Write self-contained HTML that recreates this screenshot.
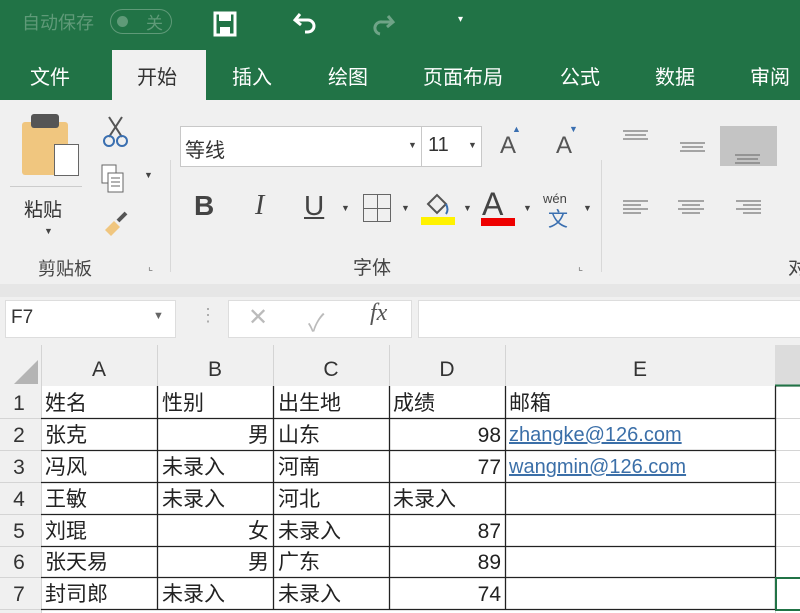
<!DOCTYPE html>
<html><head><meta charset="utf-8"><style>
*{margin:0;padding:0;box-sizing:border-box}
body{width:800px;height:613px;overflow:hidden;background:#fff;font-family:"Liberation Sans","Noto Sans CJK SC",sans-serif;position:relative}
.a{position:absolute}
.tab{position:absolute;top:61px;color:#fff;font-size:20px}
.c{position:absolute;font-size:21px;color:#222;line-height:31px;white-space:nowrap}
.r{text-align:right}
.hd{position:absolute;font-size:21px;color:#333;text-align:center}
a{color:#3b6fa8;text-decoration:underline}
</style></head><body>
<div class="a" style="left:0;top:0;width:800px;height:100px;background:#217346"></div>
<div class="a" style="left:22px;top:9px;color:#5f9a78;font-size:18px">自动保存</div>
<div class="a" style="left:110px;top:9px;width:62px;height:25px;border:1px solid #5f9a78;border-radius:13px"></div>
<div class="a" style="left:117px;top:16px;width:11px;height:11px;border-radius:50%;background:#5f9a78"></div>
<div class="a" style="left:146px;top:9px;color:#5f9a78;font-size:17px">关</div>
<svg class="a" style="left:212px;top:10px" width="28" height="28" viewBox="0 0 28 28"><rect x="3" y="3" width="20" height="22" fill="none" stroke="#fff" stroke-width="3"/><rect x="7" y="3" width="12" height="8" fill="#fff"/><rect x="8" y="17" width="10" height="8" fill="#fff"/></svg>
<svg class="a" style="left:292px;top:10px" width="28" height="28" viewBox="0 0 28 28"><path d="M8 4 L3 10 L9 15 M3 10 H16 A6 6 0 0 1 16 22 H13" fill="none" stroke="#fff" stroke-width="3"/></svg>
<svg class="a" style="left:370px;top:12px" width="28" height="28" viewBox="0 0 28 28" opacity=".35"><path d="M18 4 L23 10 L17 15 M23 10 H12 A6 6 0 0 0 10 22" fill="none" stroke="#fff" stroke-width="3"/></svg>
<div class="a" style="left:458px;top:14px;color:#fff;font-size:10px">▾</div>
<div class="a" style="left:112px;top:50px;width:94px;height:52px;background:#f0f0f0"></div>
<div class="tab" style="left:30px">文件</div>
<div class="tab" style="left:137px;color:#333">开始</div>
<div class="tab" style="left:232px">插入</div>
<div class="tab" style="left:328px">绘图</div>
<div class="tab" style="left:423px">页面布局</div>
<div class="tab" style="left:560px">公式</div>
<div class="tab" style="left:655px">数据</div>
<div class="tab" style="left:750px">审阅</div>
<div class="a" style="left:0;top:100px;width:800px;height:188px;background:#f0f0f0"></div>
<div class="a" style="left:0;top:284px;width:800px;height:14px;background:#e6e6e6"></div>
<div class="a" style="left:170px;top:160px;width:1px;height:112px;background:#d8d8d8"></div>
<div class="a" style="left:601px;top:160px;width:1px;height:112px;background:#d8d8d8"></div>
<div class="a" style="left:22px;top:122px;width:46px;height:53px;background:#f0c67f;border-radius:3px"></div>
<div class="a" style="left:31px;top:114px;width:28px;height:14px;background:#555;border-radius:3px"></div>
<div class="a" style="left:54px;top:144px;width:25px;height:32px;background:#fff;border:1px solid #666"></div>
<div class="a" style="left:10px;top:186px;width:72px;height:1px;background:#ccc"></div>
<div class="a" style="left:24px;top:195px;font-size:19px;color:#333">粘贴</div>
<div class="a" style="left:44px;top:226px;font-size:9px;color:#444">▼</div>
<svg class="a" style="left:100px;top:115px" width="32" height="34" viewBox="0 0 32 34"><path d="M9 2 L22 22 M22 2 L9 22" stroke="#555" stroke-width="2"/><circle cx="9" cy="26" r="5" fill="none" stroke="#3a6fb0" stroke-width="2"/><circle cx="22" cy="26" r="5" fill="none" stroke="#3a6fb0" stroke-width="2"/></svg>
<svg class="a" style="left:100px;top:163px" width="30" height="32" viewBox="0 0 30 32"><rect x="2" y="2" width="14" height="18" fill="#fff" stroke="#666"/><rect x="8" y="10" width="15" height="19" fill="#fff" stroke="#666"/><path d="M11 15h9M11 19h9M11 23h9" stroke="#666"/></svg>
<div class="a" style="left:144px;top:170px;font-size:9px;color:#444">▼</div>
<svg class="a" style="left:100px;top:208px" width="32" height="32" viewBox="0 0 32 32"><path d="M5 22 L14 13 L20 19 L11 28 Z" fill="#f0c67f"/><path d="M18 13 L26 5" stroke="#555" stroke-width="4"/></svg>
<div class="a" style="left:38px;top:255px;font-size:18px;color:#444">剪贴板</div>
<div class="a" style="left:148px;top:260px;font-size:11px;color:#777">⌞</div>
<div class="a" style="left:180px;top:126px;width:302px;height:41px;background:#fff;border:1px solid #c8c8c8"></div>
<div class="a" style="left:421px;top:126px;width:1px;height:41px;background:#c8c8c8"></div>
<div class="a" style="left:185px;top:134px;font-size:20px;color:#333">等线</div>
<div class="a" style="left:408px;top:140px;font-size:9px;color:#444">▼</div>
<div class="a" style="left:428px;top:134px;font-size:20px;color:#333">11</div>
<div class="a" style="left:468px;top:140px;font-size:9px;color:#444">▼</div>
<div class="a" style="left:500px;top:132px;font-size:24px;color:#555">A</div>
<div class="a" style="left:512px;top:124px;font-size:9px;color:#3a6fb0">▲</div>
<div class="a" style="left:556px;top:132px;font-size:24px;color:#555">A</div>
<div class="a" style="left:569px;top:124px;font-size:9px;color:#3a6fb0">▼</div>
<div class="a" style="left:194px;top:190px;font-size:28px;font-weight:bold;color:#444">B</div>
<div class="a" style="left:255px;top:190px;font-size:28px;font-style:italic;font-family:'Liberation Serif',serif;color:#444">I</div>
<div class="a" style="left:304px;top:190px;font-size:28px;color:#444;text-decoration:underline">U</div>
<div class="a" style="left:341px;top:203px;font-size:9px;color:#444">▼</div>
<div class="a" style="left:363px;top:194px;width:28px;height:28px;border:1px solid #666;background:linear-gradient(#666,#666) 13px 0/1px 100% no-repeat,linear-gradient(#666,#666) 0 13px/100% 1px no-repeat"></div>
<div class="a" style="left:401px;top:203px;font-size:9px;color:#444">▼</div>
<svg class="a" style="left:420px;top:192px" width="36" height="26" viewBox="0 0 36 26"><path d="M8 12 L17 3 L26 12 L17 21 Z" fill="none" stroke="#555" stroke-width="2"/><path d="M26 12 q3 6 0 10" stroke="#3a6fb0" stroke-width="2" fill="none"/></svg>
<div class="a" style="left:421px;top:217px;width:34px;height:8px;background:#fff200"></div>
<div class="a" style="left:463px;top:203px;font-size:9px;color:#444">▼</div>
<div class="a" style="left:482px;top:186px;font-size:32px;color:#444">A</div>
<div class="a" style="left:481px;top:218px;width:34px;height:8px;background:#e00"></div>
<div class="a" style="left:523px;top:203px;font-size:9px;color:#444">▼</div>
<div class="a" style="left:543px;top:191px;font-size:13px;color:#444">wén</div>
<div class="a" style="left:548px;top:203px;font-size:20px;color:#3a6fb0">文</div>
<div class="a" style="left:583px;top:203px;font-size:9px;color:#444">▼</div>
<div class="a" style="left:353px;top:253px;font-size:19px;color:#444">字体</div>
<div class="a" style="left:578px;top:260px;font-size:11px;color:#777">⌞</div>
<div class="a" style="left:720px;top:126px;width:57px;height:40px;background:#c4c4c4"></div>
<svg class="a" style="left:620px;top:125px" width="180" height="100" viewBox="0 0 180 100" stroke="#777" stroke-width="1.2"><path d="M3 6h25M5 10h21M3 14h25"/><path d="M60 18h25M62 22h21M60 26h25"/><path d="M115 30h25M117 34h21M115 38h25"/><path d="M3 76h25M3 80h18M3 84h25M3 88h18"/><path d="M58 76h26M62 80h18M58 84h26M62 88h18"/><path d="M116 76h25M123 80h18M116 84h25M123 88h18"/></svg>
<div class="a" style="left:788px;top:253px;font-size:19px;color:#444">对</div>
<div class="a" style="left:0;top:297px;width:800px;height:48px;background:#f0f0f0"></div>
<div class="a" style="left:5px;top:300px;width:171px;height:38px;background:#fff;border:1px solid #ddd"></div>
<div class="a" style="left:11px;top:307px;font-size:19px;color:#333">F7</div>
<div class="a" style="left:153px;top:310px;font-size:11px;color:#666">▼</div>
<div class="a" style="left:199px;top:305px;font-size:18px;color:#aaa">⋮</div>
<div class="a" style="left:228px;top:300px;width:184px;height:38px;background:#fff;border:1px solid #ddd"></div>
<div class="a" style="left:248px;top:303px;font-size:24px;color:#bbb">✕</div>
<div class="a" style="left:308px;top:303px;font-size:24px;color:#bbb">✓</div>
<div class="a" style="left:370px;top:300px;font-size:24px;font-style:italic;font-family:'Liberation Serif',serif;color:#555">fx</div>
<div class="a" style="left:418px;top:300px;width:390px;height:38px;background:#fff;border:1px solid #ddd"></div>
<div class="a" style="left:0;top:345px;width:800px;height:41px;background:#f0f0f0"></div>
<div class="a" style="left:0;top:386px;width:41px;height:227px;background:#f0f0f0"></div>
<svg class="a" style="left:14px;top:360px" width="26" height="24"><path d="M24 0 V24 H0 Z" fill="#b4b4b4"/></svg>
<svg class="a" style="left:0;top:345px" width="800" height="268" stroke-width="1">
<g stroke="#d4d4d4"><path d="M41.5 0V268M157.5 0V41M273.5 0V41M389.5 0V41M505.5 0V41M775.5 0V268"/><path d="M0 73.5H41M0 105.5H41M0 137.5H41M0 169.5H41M0 201.5H41M0 232.5H41M0 264.5H41"/><path d="M775 41.5H800M775 73.5H800M775 105.5H800M775 137.5H800M775 169.5H800M775 201.5H800M775 232.5H800"/></g>
<rect x="775" y="0" width="25" height="41" fill="#dcdcdc"/>
<path d="M775 40.5H800" stroke="#217346" stroke-width="2"/>
<g stroke="#222" stroke-width="1.3"><path d="M41 73.5H775M41 105.5H775M41 137.5H775M41 169.5H775M41 201.5H775M41 232.5H775M41 264.5H775"/><path d="M157.5 41V265M273.5 41V265M389.5 41V265M505.5 41V265M775.5 41V265"/></g>
<rect x="776" y="233" width="26" height="32" fill="none" stroke="#217346" stroke-width="2"/>
</svg>
<div class="hd" style="left:41px;top:358px;width:116px">A</div>
<div class="hd" style="left:157px;top:358px;width:116px">B</div>
<div class="hd" style="left:273px;top:358px;width:116px">C</div>
<div class="hd" style="left:389px;top:358px;width:116px">D</div>
<div class="hd" style="left:505px;top:358px;width:270px">E</div>
<div class="hd" style="left:0;top:392px;width:38px">1</div>
<div class="hd" style="left:0;top:424px;width:38px">2</div>
<div class="hd" style="left:0;top:456px;width:38px">3</div>
<div class="hd" style="left:0;top:488px;width:38px">4</div>
<div class="hd" style="left:0;top:520px;width:38px">5</div>
<div class="hd" style="left:0;top:551px;width:38px">6</div>
<div class="hd" style="left:0;top:583px;width:38px">7</div>
<div class="c" style="left:45px;top:388px">姓名</div><div class="c" style="left:162px;top:388px">性别</div><div class="c" style="left:278px;top:388px">出生地</div><div class="c" style="left:393px;top:388px">成绩</div><div class="c" style="left:509px;top:388px">邮箱</div>
<div class="c" style="left:45px;top:420px">张克</div><div class="c r" style="left:157px;top:420px;width:112px">男</div><div class="c" style="left:278px;top:420px">山东</div><div class="c r" style="left:389px;top:420px;width:112px">98</div><div class="c" style="left:509px;top:420px;font-size:20px"><a>zhangke@126.com</a></div>
<div class="c" style="left:45px;top:452px">冯风</div><div class="c" style="left:162px;top:452px">未录入</div><div class="c" style="left:278px;top:452px">河南</div><div class="c r" style="left:389px;top:452px;width:112px">77</div><div class="c" style="left:509px;top:452px;font-size:20px"><a>wangmin@126.com</a></div>
<div class="c" style="left:45px;top:484px">王敏</div><div class="c" style="left:162px;top:484px">未录入</div><div class="c" style="left:278px;top:484px">河北</div><div class="c" style="left:393px;top:484px">未录入</div>
<div class="c" style="left:45px;top:516px">刘琨</div><div class="c r" style="left:157px;top:516px;width:112px">女</div><div class="c" style="left:278px;top:516px">未录入</div><div class="c r" style="left:389px;top:516px;width:112px">87</div>
<div class="c" style="left:45px;top:547px">张天易</div><div class="c r" style="left:157px;top:547px;width:112px">男</div><div class="c" style="left:278px;top:547px">广东</div><div class="c r" style="left:389px;top:547px;width:112px">89</div>
<div class="c" style="left:45px;top:579px">封司郎</div><div class="c" style="left:162px;top:579px">未录入</div><div class="c" style="left:278px;top:579px">未录入</div><div class="c r" style="left:389px;top:579px;width:112px">74</div>
</body></html>
